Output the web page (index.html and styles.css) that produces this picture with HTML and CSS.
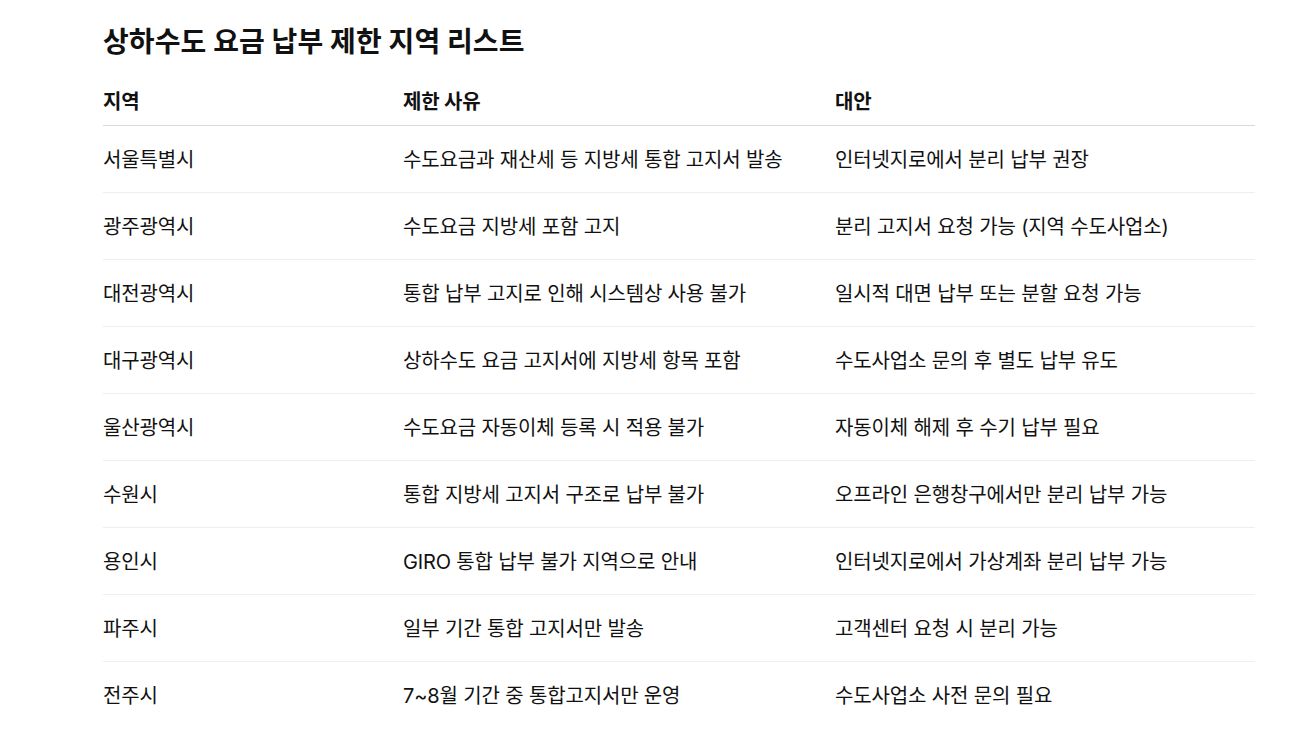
FILE: index.html
```html
<!DOCTYPE html>
<html lang="ko">
<head>
<meta charset="utf-8">
<link rel="stylesheet" href="styles.css">
</head>
<body>
<main class="page">
  <h1 class="title">상하수도 요금 납부 제한 지역 리스트</h1>
  <table class="list">
    <thead>
      <tr><th>지역</th><th>제한 사유</th><th>대안</th></tr>
    </thead>
    <tbody>
      <tr><td>서울특별시</td><td>수도요금과 재산세 등 지방세 통합 고지서 발송</td><td>인터넷지로에서 분리 납부 권장</td></tr>
      <tr><td>광주광역시</td><td>수도요금 지방세 포함 고지</td><td>분리 고지서 요청 가능 (지역 수도사업소)</td></tr>
      <tr><td>대전광역시</td><td>통합 납부 고지로 인해 시스템상 사용 불가</td><td>일시적 대면 납부 또는 분할 요청 가능</td></tr>
      <tr><td>대구광역시</td><td>상하수도 요금 고지서에 지방세 항목 포함</td><td>수도사업소 문의 후 별도 납부 유도</td></tr>
      <tr><td>울산광역시</td><td>수도요금 자동이체 등록 시 적용 불가</td><td>자동이체 해제 후 수기 납부 필요</td></tr>
      <tr><td>수원시</td><td>통합 지방세 고지서 구조로 납부 불가</td><td>오프라인 은행창구에서만 분리 납부 가능</td></tr>
      <tr><td>용인시</td><td>GIRO 통합 납부 불가 지역으로 안내</td><td>인터넷지로에서 가상계좌 분리 납부 가능</td></tr>
      <tr><td>파주시</td><td>일부 기간 통합 고지서만 발송</td><td>고객센터 요청 시 분리 가능</td></tr>
      <tr><td>전주시</td><td>7~8월 기간 중 통합고지서만 운영</td><td>수도사업소 사전 문의 필요</td></tr>
    </tbody>
  </table>
</main>
</body>
</html>
```

FILE: styles.css
```css
html, body {
  margin: 0;
  padding: 0;
  background: #ffffff;
}
body {
  font-family: Inter, "Noto Sans CJK KR", sans-serif;
  color: #111111;
}
.page {
  padding: 25px 57px 0 103px;
}
.title {
  margin: 0;
  font-size: 28px;
  line-height: 34px;
  font-weight: 700;
  letter-spacing: 0.1px;
}
.list {
  margin-top: 20px;
  width: 1152px;
  border-collapse: collapse;
  font-size: 20px;
  line-height: 26px;
  letter-spacing: -0.15px;
}
.list th,
.list td {
  padding: 0;
  text-align: left;
  vertical-align: middle;
}
.list th:nth-child(1), .list td:nth-child(1) { width: 300px; }
.list th:nth-child(2), .list td:nth-child(2) { width: 432px; }
.list th {
  font-weight: 700;
  padding: 10px 0 10px;
  border-bottom: 1px solid #d9d9d9;
}
.list td {
  font-weight: 400;
  padding: 21px 0 19px;
  border-bottom: 1px solid #eeeeee;
}
.list tbody tr:last-child td {
  border-bottom: none;
}
```
